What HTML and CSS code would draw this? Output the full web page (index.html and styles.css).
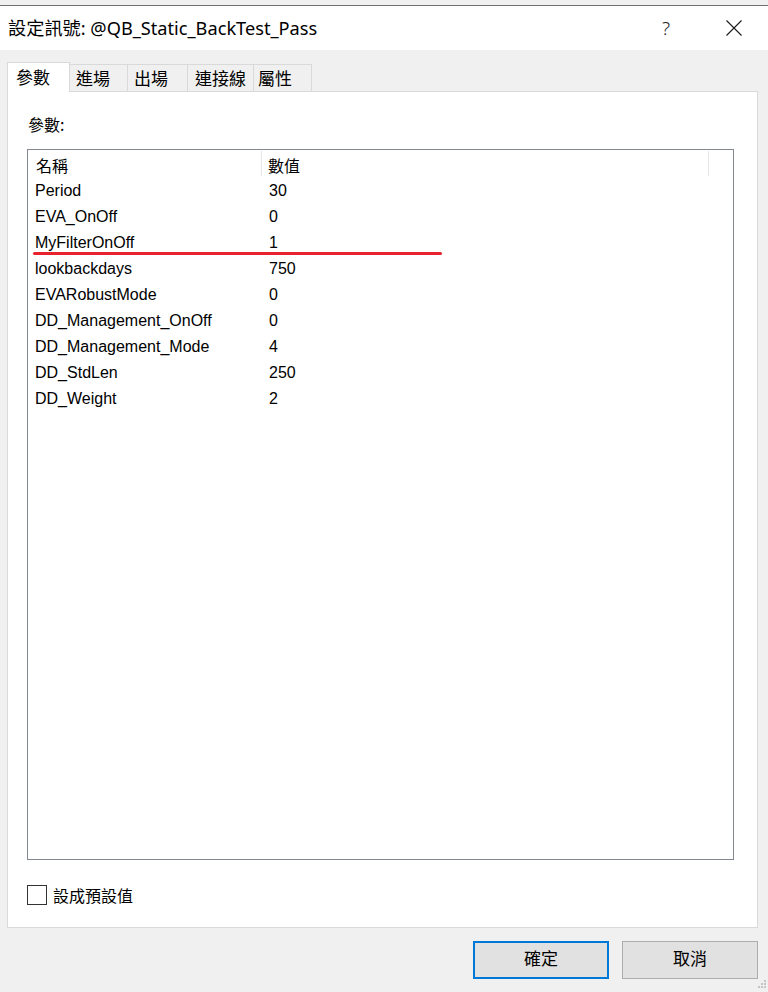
FILE: index.html
```html
<!DOCTYPE html>
<html lang="zh-Hant">
<head>
<meta charset="utf-8">
<title>設定訊號</title>
<link rel="stylesheet" href="styles.css">
</head>
<body>
<div class="window">
  <div class="topstrip"></div>
  <div class="titlebar">
    <span class="title">設定訊號: @QB_Static_BackTest_Pass</span>
    <span class="help">?</span>
    <span class="close">
      <svg width="16" height="16" viewBox="0 0 16 16"><path d="M0.5 0.5 L15.5 15.5 M15.5 0.5 L0.5 15.5" stroke="#1a1a1a" stroke-width="1.1" fill="none"/></svg>
    </span>
  </div>
  <div class="client">
    <div class="tabs">
      <div class="tab active">參數</div>
      <div class="tab t2">進場</div>
      <div class="tab t3">出場</div>
      <div class="tab t4">連接線</div>
      <div class="tab t5">屬性</div>
    </div>
    <div class="panel">
      <div class="label">參數:</div>
      <div class="listbox">
        <div class="lhead">
          <div class="hcell c1">名稱</div>
          <div class="hcell c2">數值</div>
          <div class="hcell c3"></div>
        </div>
        <div class="row"><span class="c1">Period</span><span class="c2">30</span></div>
        <div class="row"><span class="c1">EVA_OnOff</span><span class="c2">0</span></div>
        <div class="row"><span class="c1">MyFilterOnOff</span><span class="c2">1</span></div>
        <div class="row"><span class="c1">lookbackdays</span><span class="c2">750</span></div>
        <div class="row"><span class="c1">EVARobustMode</span><span class="c2">0</span></div>
        <div class="row"><span class="c1">DD_Management_OnOff</span><span class="c2">0</span></div>
        <div class="row"><span class="c1">DD_Management_Mode</span><span class="c2">4</span></div>
        <div class="row"><span class="c1">DD_StdLen</span><span class="c2">250</span></div>
        <div class="row"><span class="c1">DD_Weight</span><span class="c2">2</span></div>
        <div class="redline"></div>
      </div>
      <label class="check"><span class="box"></span><span class="ctext">設成預設值</span></label>
    </div>
    <div class="buttons">
      <button class="btn default">確定</button>
      <button class="btn">取消</button>
    </div>
  </div>
  <svg class="grip" width="12" height="12" viewBox="0 0 12 12">
    <rect x="9" y="1" width="2" height="2" fill="#c4c4c4"/>
    <rect x="6" y="4" width="2" height="2" fill="#c4c4c4"/>
    <rect x="9" y="4" width="2" height="2" fill="#c4c4c4"/>
    <rect x="3" y="7" width="2" height="2" fill="#c4c4c4"/>
    <rect x="6" y="7" width="2" height="2" fill="#c4c4c4"/>
    <rect x="9" y="7" width="2" height="2" fill="#c4c4c4"/>
  </svg>
</div>
</body>
</html>
```
FILE: styles.css
```css
* { box-sizing: border-box; }
html, body { margin: 0; padding: 0; }
body {
  width: 768px;
  height: 992px;
  background: #f0f0f0;
  font-family: "Noto Sans CJK TC", "Noto Sans", sans-serif;
  color: #000;
  overflow: hidden;
}
.window {
  position: relative;
  width: 768px;
  height: 992px;
  display: flex;
  flex-direction: column;
}
.topstrip {
  height: 6px;
  background: #f0f0f0;
  border-bottom: 1px solid #707070;
}
.titlebar {
  height: 44px;
  background: #fff;
  display: flex;
  align-items: center;
  padding-left: 8px;
}
.title {
  font-family: "Noto Sans", "Noto Sans CJK TC", sans-serif;
  font-size: 18.2px;
  line-height: 24px;
  flex: 1;
  margin-top: -1px;
}
.help {
  font-family: "Noto Sans", sans-serif;
  font-size: 19px;
  font-weight: 300;
  color: #222;
  width: 16px;
  margin-right: 48px;
  line-height: 24px;
}
.close {
  width: 16px;
  height: 16px;
  margin-right: 26px;
  display: flex;
}
.client {
  flex: 1;
  padding: 12px 0 0 7px;
  display: flex;
  flex-direction: column;
}
.tabs {
  display: flex;
  align-items: flex-end;
  height: 29px;
}
.tab {
  height: 27px;
  font-size: 17px;
  line-height: 26px;
  border-top: 1px solid #d9d9d9;
  border-right: 1px solid #d9d9d9;
  background: #f0f0f0;
  padding-left: 6px;
}
.tab.active {
  position: relative;
  z-index: 1;
  width: 63px;
  height: 30px;
  margin-bottom: -1px;
  background: #fff;
  border-left: 1px solid #d9d9d9;
  padding-left: 8px;
  line-height: 28px;
}
.t2 { width: 58px; }
.t3 { width: 60px; }
.t4 { width: 66px; padding-left: 7px; }
.t5 { width: 58px; padding-left: 4px; }
.panel {
  width: 751px;
  height: 837px;
  background: #fff;
  border: 1px solid #d9d9d9;
  padding: 22px 0 0 19px;
  display: flex;
  flex-direction: column;
}
.label {
  font-size: 16px;
  line-height: 20px;
  height: 20px;
  padding-left: 1px;
  margin-bottom: 15px;
}
.listbox {
  position: relative;
  width: 707px;
  height: 711px;
  border: 1px solid #828790;
  font-family: "Liberation Sans", "Noto Sans CJK TC", sans-serif;
  font-size: 16px;
}
.lhead {
  display: flex;
  height: 26px;
}
.hcell {
  font-family: "Noto Sans CJK TC", sans-serif;
  font-size: 16px;
  line-height: 28px;
  height: 26px;
}
.lhead .c1 { width: 234px; padding-left: 8px; border-right: 1px solid #e5e5e5; margin-top: 1px; height: 25px; }
.lhead .c2 { width: 447px; padding-left: 6px; border-right: 1px solid #e5e5e5; margin-top: 1px; height: 25px; }
.row {
  display: flex;
  height: 26px;
  line-height: 29px;
}
.row .c1 { width: 234px; padding-left: 7px; }
.row .c2 { padding-left: 7px; }
.redline {
  position: absolute;
  left: 5px;
  top: 102px;
  width: 409px;
  height: 3px;
  border-radius: 2px;
  background: #e8232e;
}
.check {
  display: flex;
  align-items: center;
  margin-top: 24px;
  height: 21px;
}
.box {
  width: 20px;
  height: 20px;
  border: 1px solid #333;
  background: #fff;
}
.ctext {
  font-size: 16px;
  line-height: 20px;
  margin-left: 6px;
}
.buttons {
  display: flex;
  justify-content: flex-end;
  gap: 13px;
  padding-right: 10px;
  margin-top: 13px;
}
.btn {
  width: 136px;
  height: 38px;
  background: #e1e1e1;
  border: 1px solid #adadad;
  font-family: "Noto Sans CJK TC", sans-serif;
  font-size: 17px;
  line-height: 20px;
  color: #000;
  padding: 0 0 4px 0;
  margin: 0;
}
.btn.default {
  border: 2px solid #0078d7;
}
.grip {
  position: absolute;
  right: 1px;
  bottom: 1px;
}
```
